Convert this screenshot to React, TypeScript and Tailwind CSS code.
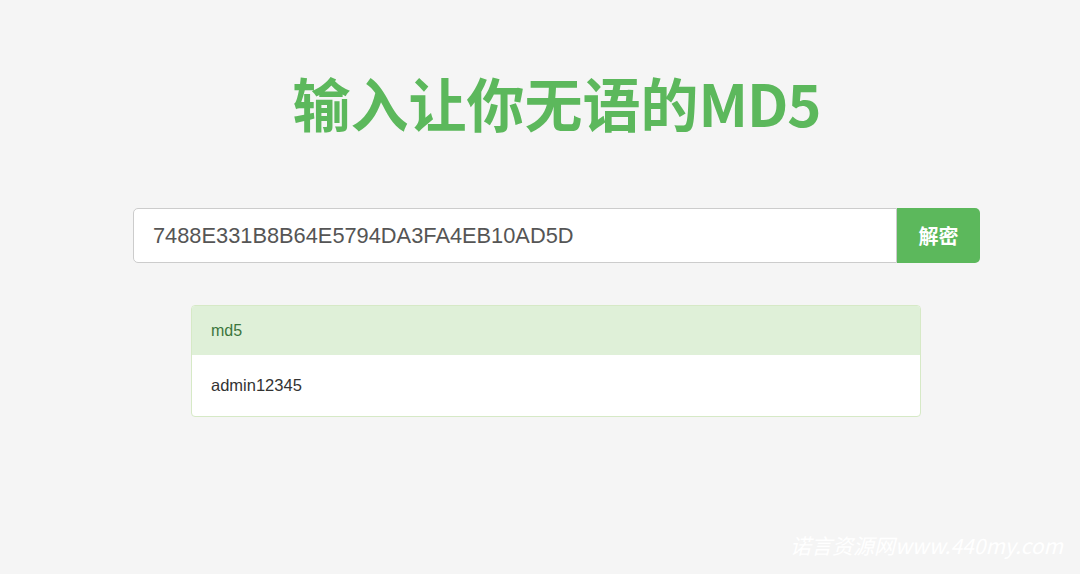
import { useState } from 'react';

export default function App() {
  const [hash, setHash] = useState('7488E331B8B64E5794DA3FA4EB10AD5D');

  return (
    <div className="relative h-[574px] w-[1080px] overflow-hidden bg-[#f5f5f5] font-['Liberation_Sans','Noto_Sans_CJK_SC',sans-serif]">
      <div className="ml-[133px] w-[847px] pt-[69px]">
        <h1 className="text-center text-[58px] font-bold leading-[66px] text-[#5cb85c] font-['Noto_Sans_CJK_SC',sans-serif]">
          输入让你无语的<span className="tracking-[-1px]">MD5</span>
        </h1>

        <div className="mt-[73px] flex h-[55px]">
          <input
            type="text"
            value={hash}
            onChange={(e) => setHash(e.target.value)}
            className="h-full flex-1 rounded-l-[5px] border border-[#ccc] bg-white px-[19px] text-[21.8px] text-[#555] outline-none"
          />
          <button className="h-full w-[83px] rounded-r-[5px] bg-[#5cb85c] text-[20px] font-bold text-white font-['Noto_Sans_CJK_SC',sans-serif]">
            解密
          </button>
        </div>

        <div className="ml-[58px] mt-[42px] w-[730px] overflow-hidden rounded-[4px] border border-[#d6e9c6] bg-white">
          <div className="flex h-[49px] items-center bg-[#dff0d8] px-[19px] text-[16px] text-[#3c763d]">
            md5
          </div>
          <div className="flex h-[61px] items-center px-[19px] text-[16.5px] text-[#333]">
            admin12345
          </div>
        </div>
      </div>

      <div className="absolute left-[790px] top-[530px] whitespace-nowrap text-[21px] italic text-white font-['Noto_Sans_CJK_SC',sans-serif]">
        诺言资源网www.440my.com
      </div>
    </div>
  );
}
